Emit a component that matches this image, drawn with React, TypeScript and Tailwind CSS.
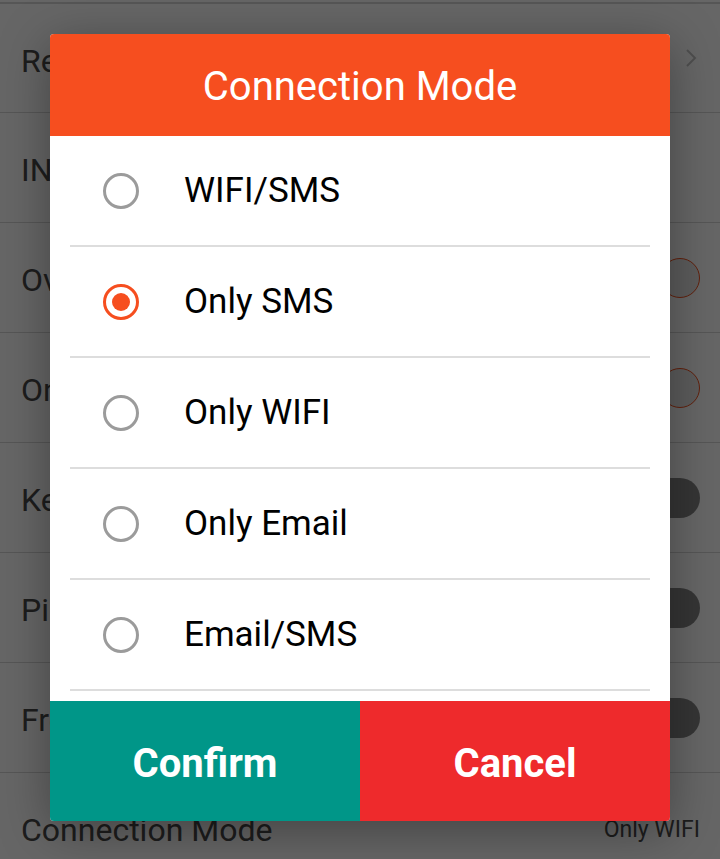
import { useState } from "react";

type Row = { label: string; right?: "chevron" | "ring" | "pill" | "text"; value?: string };

const ROWS: Row[] = [
  { label: "Remote Settings", right: "chevron" },
  { label: "INSTANT Alarm" },
  { label: "Overtime Alarm", right: "ring" },
  { label: "Only Arm Mode", right: "ring" },
  { label: "Keypad Tone", right: "pill" },
  { label: "Pin Protection", right: "pill" },
  { label: "Free Mode", right: "pill" },
  { label: "Connection Mode", right: "text", value: "Only WIFI" },
];

const MODES = ["WIFI/SMS", "Only SMS", "Only WIFI", "Only Email", "Email/SMS", "WIFI/Email"];

function Radio({ on }: { on: boolean }) {
  return (
    <span
      className={`w-9 h-9 rounded-full border-[3px] flex items-center justify-center shrink-0 ${
        on ? "border-[#f64e1f]" : "border-[#9b9b9b]"
      }`}
    >
      {on && <span className="w-[18px] h-[18px] rounded-full bg-[#f64e1f]" />}
    </span>
  );
}

export default function App() {
  const [mode, setMode] = useState(1);

  return (
    <div className="relative h-[859px] w-[720px] overflow-hidden bg-white font-['Roboto','Liberation_Sans',sans-serif]">
      {/* settings list behind the dialog */}
      <div className="pt-[2px]">
        {ROWS.map((r, i) => (
          <div
            key={r.label}
            className={`h-[110px] flex items-center justify-between pl-[21px] pr-5 border-[#d8d8d8] ${
              i === 0 ? "border-t-2" : "border-t"
            }`}
          >
            <span className="text-[32px] text-[#4a4a4a] pt-[5px]">{r.label}</span>
            {r.right === "chevron" && (
              <svg width="14" height="22" viewBox="0 0 14 22" className="mr-[2px]">
                <path d="M3 3l8 8-8 8" fill="none" stroke="#c4c4c4" strokeWidth="2" />
              </svg>
            )}
            {r.right === "ring" && (
              <span className="w-10 h-10 rounded-full border border-[#f4511e] bg-[#e6e6e6]" />
            )}
            {r.right === "pill" && <span className="w-20 h-10 rounded-full bg-[#868686]" />}
            {r.right === "text" && (
              <span className="text-[23px] text-[#4a4a4a] pt-[5px]">{r.value}</span>
            )}
          </div>
        ))}
      </div>

      {/* dim overlay */}
      <div className="absolute inset-0 bg-black/60 flex items-center justify-center pb-1">
        <div className="w-[620px] rounded-sm overflow-hidden bg-white shadow-[0_10px_50px_rgba(0,0,0,0.35)]">
          <div className="h-[102px] bg-[#f64e1f] flex items-center justify-center pt-1">
            <h1 className="text-[40px] text-white">Connection Mode</h1>
          </div>

          <div className="h-[565px] overflow-hidden">
            {MODES.map((m, i) => (
              <div key={m} onClick={() => setMode(i)} className="cursor-pointer">
                <div className="h-[109px] flex items-center pl-[53px] gap-[45px]">
                  <Radio on={mode === i} />
                  <span className="text-[35px] text-black pt-[2px]">{m}</span>
                </div>
                <div className="mx-5 h-[2px] bg-[#dddddd]" />
              </div>
            ))}
          </div>

          <div className="flex h-[120px]">
            <button className="flex-1 bg-[#009688] text-white text-[40px] font-bold pt-[6px]">Confirm</button>
            <button className="flex-1 bg-[#ee2a2c] text-white text-[40px] font-bold pt-[6px]">Cancel</button>
          </div>
        </div>
      </div>
    </div>
  );
}
